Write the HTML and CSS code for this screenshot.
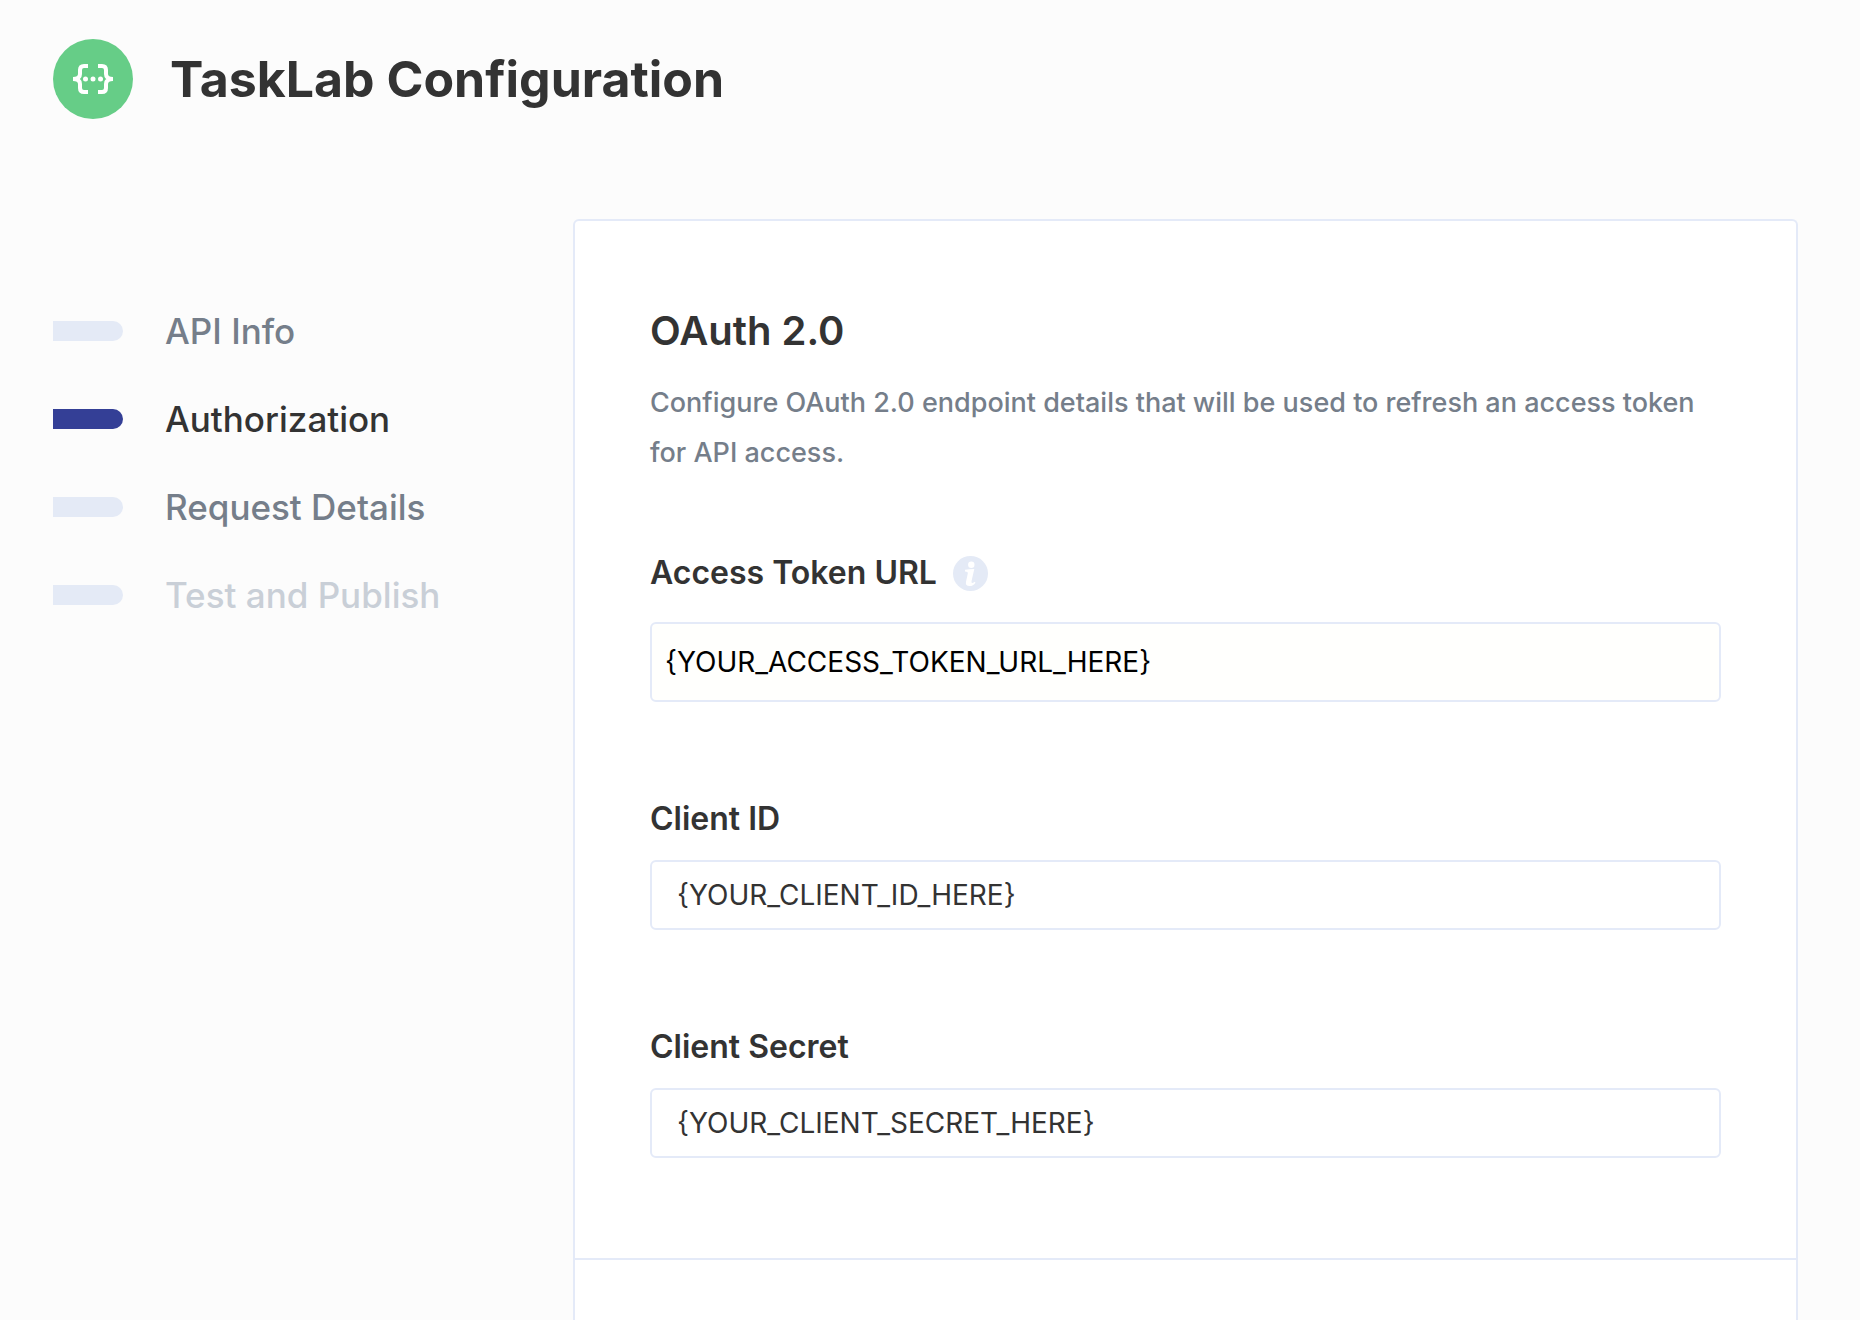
FILE: index.html
```html
<!DOCTYPE html>
<html lang="en">
<head>
	<meta charset="UTF-8">
	<title>TaskLab Configuration</title>
	<link rel="stylesheet" href="styles.css">
</head>
<body>
	<header class="header">
		<svg class="logo" viewBox="0 0 80 80" aria-hidden="true">
			<circle cx="40" cy="40" r="40" fill="#66cd87"/>
			<path d="M35 27h-4q-4 0-4 4v4q0 5-7 5q7 0 7 5v4q0 4 4 4h4M45 27h4q4 0 4 4v4q0 5 7 5q-7 0-7 5v4q0 4-4 4h-4" fill="none" stroke="#fff" stroke-width="4"/>
			<circle cx="32.500" cy="40" r="2.500" fill="#fff"/>
			<circle cx="40" cy="40" r="2.500" fill="#fff"/>
			<circle cx="47.500" cy="40" r="2.500" fill="#fff"/>
		</svg>
		<h1 class="title">TaskLab Configuration</h1>
	</header>
	<div class="content">
		<nav class="steps">
			<a class="step" href="#info">API Info</a>
			<a class="step active" href="#auth">Authorization</a>
			<a class="step" href="#request">Request Details</a>
			<a class="step disabled" href="#publish">Test and Publish</a>
		</nav>
		<main class="card">
			<form class="form">
				<h2 class="subtitle">OAuth 2.0</h2>
				<p class="desc">Configure OAuth 2.0 endpoint details that will be used to refresh an access token for API access.</p>
				<div class="field url">
					<div class="label">
						<label for="tokenUrl">Access Token URL</label>
						<svg class="info" viewBox="0 0 35 35" aria-hidden="true">
							<circle cx="17.500" cy="17.500" r="17.500" fill="#e4eaf6"/>
							<circle cx="18.300" cy="8.800" r="3.200" fill="#fff"/>
							<path d="M12 13.700q4-.3 9.300-.7l-2.800 12.200q-.4 2 1 1.800q1.100-.2 2.200-1.300l.8 1q-2.300 3.400-5.900 3.400q-4.500 0-3.600-4.400l1.800-8.300q.4-1.800-2.800-2z" fill="#fff"/>
						</svg>
					</div>
					<input class="input" id="tokenUrl" type="text" value="{YOUR_ACCESS_TOKEN_URL_HERE}">
				</div>
				<div class="field">
					<div class="label"><label for="clientId">Client ID</label></div>
					<input class="input" id="clientId" type="text" value="{YOUR_CLIENT_ID_HERE}">
				</div>
				<div class="field">
					<div class="label"><label for="clientSecret">Client Secret</label></div>
					<input class="input" id="clientSecret" type="text" value="{YOUR_CLIENT_SECRET_HERE}">
				</div>
			</form>
		</main>
	</div>
</body>
</html>
```
FILE: styles.css
```css
*{
	padding: 0;
	margin: 0;
	box-sizing: border-box;
}
body{
	display: flex;
	flex-direction: column;
	min-height: 100vh;
	padding: 39px 62px 0 53px;
	background: #fcfcfc;
	color: #333;
	font-family: Inter, "Liberation Sans", sans-serif;
	font-weight: 500;
}
.header{
	display: flex;
	align-items: center;
	gap: 37px;
	margin-bottom: 100px;
}
.logo{
	width: 80px;
	height: 80px;
}
.title{
	font-size: 50px;
	line-height: 60px;
	font-weight: 700;
}
.content{
	display: flex;
	flex: 1;
}
.steps{
	display: flex;
	flex-direction: column;
	gap: 44px;
	width: 520px;
	padding-top: 90px;
}
.step{
	display: flex;
	align-items: center;
	gap: 42px;
	font-size: 35px;
	line-height: 44px;
	color: #757e8a;
	text-decoration: none;
}
.step::before{
	content: "";
	width: 70px;
	height: 20px;
	border-radius: 0 10px 10px 0;
	background: #e4eaf6;
}
.step.active{
	color: #333;
}
.step.active::before{
	background: #343f96;
}
.step.disabled{
	color: #c9cfd7;
}
.card{
	flex: 1;
	border: 2px solid #e4eaf8;
	border-bottom: none;
	border-radius: 6px 6px 0 0;
	background: #fff;
}
.form{
	padding: 85px 75px 100px;
	border-bottom: 2px solid #e4eaf8;
}
.subtitle{
	font-size: 40px;
	line-height: 50px;
	font-weight: 600;
}
.desc{
	margin: 22px 0 75px;
	font-size: 27px;
	line-height: 50px;
	color: #757e8a;
}
.field + .field{
	margin-top: 97px;
}
.label{
	display: flex;
	align-items: center;
	gap: 16px;
	margin-bottom: 21px;
	font-size: 32px;
	line-height: 40px;
	font-weight: 600;
}
.info{
	width: 35px;
	height: 35px;
}
.input{
	display: block;
	width: 100%;
	height: 70px;
	padding: 0 25px;
	border: 2px solid #e4eaf8;
	border-radius: 6px;
	background: #fff;
	color: #333;
	font: inherit;
	font-size: 28px;
	font-weight: 400;
}
.url .label{
	margin-bottom: 29px;
}
.url .input{
	height: 80px;
	padding: 0 13px;
	background: #fffffd;
	color: #000;
}
```
